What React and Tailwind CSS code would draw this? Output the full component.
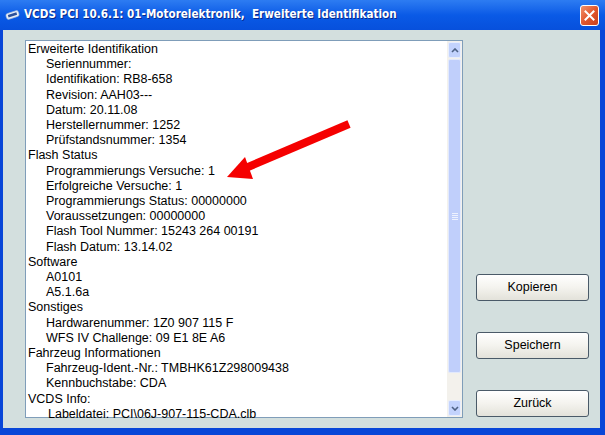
import React from "react";

const lines = [
  [0, "Erweiterte Identifikation"],
  [1, "Seriennummer:"],
  [1, "Identifikation: RB8-658"],
  [1, "Revision: AAH03---"],
  [1, "Datum: 20.11.08"],
  [1, "Herstellernummer: 1252"],
  [1, "Prüfstandsnummer: 1354"],
  [0, "Flash Status"],
  [1, "Programmierungs Versuche: 1"],
  [1, "Erfolgreiche Versuche: 1"],
  [1, "Programmierungs Status: 00000000"],
  [1, "Voraussetzungen: 00000000"],
  [1, "Flash Tool Nummer: 15243 264 00191"],
  [1, "Flash Datum: 13.14.02"],
  [0, "Software"],
  [1, "A0101"],
  [1, "A5.1.6a"],
  [0, "Sonstiges"],
  [1, "Hardwarenummer: 1Z0 907 115 F"],
  [1, "WFS IV Challenge: 09 E1 8E A6"],
  [0, "Fahrzeug Informationen"],
  [1, "Fahrzeug-Ident.-Nr.: TMBHK61Z298009438"],
  [1, "Kennbuchstabe: CDA"],
  [0, "VCDS Info:"],
  [2, "Labeldatei: PCI\\06J-907-115-CDA.clb"],
];

function XpButton({ children }) {
  return (
    <button className="h-[27px] w-[113px] rounded-[3px] border border-[#4a5a68] bg-gradient-to-b from-[#ffffff] via-[#f4f3ee] to-[#e3e2da] text-[12.5px] text-black">
      {children}
    </button>
  );
}

export default function App() {
  return (
    <div
      className="flex h-[435px] w-[605px] flex-col overflow-hidden bg-[#0846d8]"
      style={{ fontFamily: '"Liberation Sans", Arial, sans-serif' }}
    >
      {/* title bar */}
      <div className="flex h-[30px] shrink-0 items-center bg-gradient-to-b from-[#2d7cf2] via-[#0a5ae6] to-[#0750dc] pl-[5px] pr-[6px]">
        <svg width="15" height="12" viewBox="0 0 15 12" className="mr-[4px]">
          <g transform="rotate(-18 7.5 6)">
            <rect x="1" y="3" width="13" height="6" rx="2" fill="#e8eef8" stroke="#9fb4d8" strokeWidth="0.6" />
            <rect x="3" y="4.6" width="9" height="2.6" fill="#2a4f9a" />
          </g>
        </svg>
        <span
          className="flex-1 text-[11.6px] font-bold text-white"
          style={{ fontFamily: '"DejaVu Sans Condensed", "Liberation Sans", sans-serif', textShadow: "1px 1px 0 #0a2a8a" }}
        >
          VCDS PCI 10.6.1: 01-Motorelektronik,&nbsp; Erweiterte Identifikation
        </span>
        <div className="flex h-[21px] w-[19px] items-center justify-center rounded-[3px] border border-white bg-gradient-to-br from-[#f0906a] via-[#e2572d] to-[#c8401c]">
          <svg width="11" height="11" viewBox="0 0 11 11">
            <path d="M1.5 1.5 L9.5 9.5 M9.5 1.5 L1.5 9.5" stroke="white" strokeWidth="2" strokeLinecap="square" />
          </svg>
        </div>
      </div>

      {/* body */}
      <div className="mb-[7px] ml-[3px] mr-[5px] flex flex-1 bg-[#d3dfde] pb-[10px] pl-[22px] pt-[10px]">
        <div className="relative flex h-[378px] w-[438px] border border-[#7f9db9] bg-white">
          <div className="flex-1 pl-[1px] pt-[1px] text-[12.5px] leading-[15.2px] text-black">
            {lines.map(([lvl, t], i) => (
              <div
                key={i}
                className={lvl === 0 ? "pl-[1px]" : lvl === 1 ? "pl-[19px]" : "pl-[21px]"}
              >
                {t}
              </div>
            ))}
          </div>

          {/* scrollbar */}
          <div className="flex w-[15px] flex-col bg-[#f3f1ec] p-[1px]">
            <div className="flex h-[16px] items-center justify-center rounded-[2px] border border-[#e8eefc] bg-[#c3d3fd]">
              <svg width="8" height="5" viewBox="0 0 8 5">
                <path d="M1 4 L4 1 L7 4" stroke="#4d6185" strokeWidth="1.6" fill="none" />
              </svg>
            </div>
            <div className="mt-[1px] flex h-[314px] items-center justify-center rounded-[2px] border border-[#e2e9fc] bg-[#c0cffb]">
              <div className="flex flex-col gap-[1px]">
                <div className="h-[1px] w-[6px] bg-[#eef2fe]" />
                <div className="h-[1px] w-[6px] bg-[#eef2fe]" />
                <div className="h-[1px] w-[6px] bg-[#eef2fe]" />
                <div className="h-[1px] w-[6px] bg-[#eef2fe]" />
              </div>
            </div>
            <div className="flex-1" />
            <div className="flex h-[16px] items-center justify-center rounded-[2px] border border-[#e8eefc] bg-[#c3d3fd]">
              <svg width="8" height="5" viewBox="0 0 8 5">
                <path d="M1 1 L4 4 L7 1" stroke="#4d6185" strokeWidth="1.6" fill="none" />
              </svg>
            </div>
          </div>

          {/* red arrow overlay */}
          <svg
            className="pointer-events-none absolute left-0 top-0"
            width="438"
            height="378"
            viewBox="0 0 438 378"
          >
            <line x1="323" y1="83" x2="215" y2="129" stroke="#f50000" strokeWidth="8" />
            <polygon points="201,136 219,116 227,138" fill="#f50000" />
          </svg>
        </div>

        <div className="ml-[13px] flex flex-col justify-end gap-[31px] pb-[1px]">
          <XpButton>Kopieren</XpButton>
          <XpButton>Speichern</XpButton>
          <XpButton>Zurück</XpButton>
        </div>
      </div>
    </div>
  );
}
